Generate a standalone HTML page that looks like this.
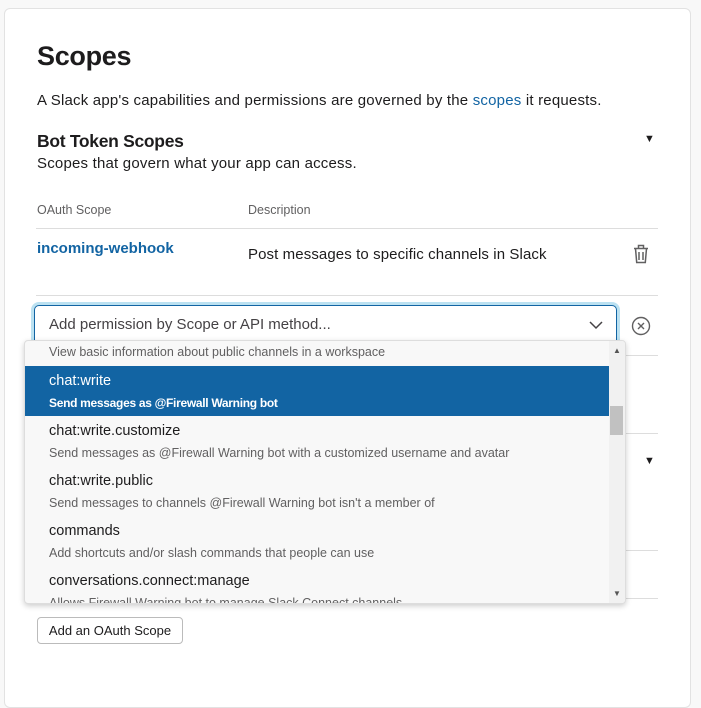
<!DOCTYPE html>
<html><head><style>
*{margin:0;padding:0;box-sizing:border-box}
body{width:701px;height:650px;background:#f8f8f8;font-family:"Liberation Sans",sans-serif;color:#1d1c1d;position:relative;overflow:hidden}
.card{position:absolute;left:4px;top:8px;width:687px;height:700px;background:#fff;border:1px solid #e2e2e2;border-radius:6px}
.a{position:absolute;white-space:nowrap}
.line{position:absolute;left:36px;width:622px;height:1px;background:#ddd}
.dd{position:absolute;left:24px;top:340px;width:602px;height:264px;background:#f8f8f8;border:1px solid #ddd;border-radius:4px;box-shadow:0 2px 6px rgba(0,0,0,.2);overflow:hidden}
.it{position:absolute;left:24px;white-space:nowrap}
.t{font-size:14.5px;color:#1d1c1d}
.d{font-size:12.5px;color:#616061}
</style></head><body>
<div class="card"></div>
<div class="a" style="left:37px;top:41px;font-size:27px;font-weight:bold;letter-spacing:-0.3px">Scopes</div>
<div class="a" style="left:37px;top:92px;font-size:15px;letter-spacing:0.2px">A Slack app's capabilities and permissions are governed by the <span style="color:#1264a3">scopes</span> it requests.</div>
<div class="a" style="left:37px;top:131px;font-size:17.5px;font-weight:bold;letter-spacing:-0.3px">Bot Token Scopes</div>
<div class="a" style="left:644px;top:133px;font-size:11px">▼</div>
<div class="a" style="left:37px;top:155px;font-size:15px;letter-spacing:0.2px">Scopes that govern what your app can access.</div>
<div class="a" style="left:37px;top:203px;font-size:12.5px;color:#616061">OAuth Scope</div>
<div class="a" style="left:248px;top:203px;font-size:12.5px;color:#616061">Description</div>
<div class="line" style="top:228px"></div>
<div class="a" style="left:37px;top:240px;font-size:15px;font-weight:bold;color:#1264a3">incoming-webhook</div>
<div class="a" style="left:248px;top:246px;font-size:15px;letter-spacing:0.1px">Post messages to specific channels in Slack</div>
<svg class="a" style="left:631px;top:243px" width="20" height="22" viewBox="0 0 20 22"><path d="M3 5.5h14M7.5 5.5V2.5h5v3M4.5 5.5l1.2 14h8.6l1.2-14M8 9v8M12 9v8" fill="none" stroke="#616061" stroke-width="1.5"/></svg>
<div class="line" style="top:295px"></div>
<div class="line" style="top:355px"></div>
<div class="line" style="top:433px"></div>
<div class="line" style="top:550px"></div>
<div class="line" style="top:598px"></div>
<div class="a" style="left:644px;top:455px;font-size:11px">▼</div>
<div class="a" style="left:34px;top:305px;width:583px;height:42px;border:1px solid #1264a3;border-radius:5px;box-shadow:0 0 0 3px rgba(29,155,209,.3);background:#fff"></div>
<div class="a" style="left:49px;top:316px;font-size:15px;color:#454245">Add permission by Scope or API method...</div>
<svg class="a" style="left:589px;top:320px" width="14" height="10"><path d="M1 2l6 6 6-6" fill="none" stroke="#454245" stroke-width="1.5"/></svg>
<svg class="a" style="left:630px;top:315px" width="22" height="22"><circle cx="11" cy="11" r="8.5" fill="none" stroke="#616061" stroke-width="1.4"/><path d="M8 8l6 6M14 8l-6 6" stroke="#616061" stroke-width="1.4"/></svg>
<div class="a" style="left:37px;top:617px;width:146px;height:27px;border:1px solid #bbb;border-radius:4px;background:#fff;font-size:13px;text-align:center;line-height:25px">Add an OAuth Scope</div>
<div class="dd">
 <div class="it d" style="top:4px">View basic information about public channels in a workspace</div>
 <div style="position:absolute;left:0;top:25px;width:584px;height:50px;background:#1264a3"></div>
 <div class="it t" style="top:32px;color:#fff">chat:write</div>
 <div class="it d" style="top:55px;color:#fff;font-weight:bold;font-size:12px;letter-spacing:-0.3px">Send messages as @Firewall Warning bot</div>
 <div class="it t" style="top:82px">chat:write.customize</div>
 <div class="it d" style="top:105px">Send messages as @Firewall Warning bot with a customized username and avatar</div>
 <div class="it t" style="top:132px">chat:write.public</div>
 <div class="it d" style="top:155px">Send messages to channels @Firewall Warning bot isn't a member of</div>
 <div class="it t" style="top:182px">commands</div>
 <div class="it d" style="top:205px">Add shortcuts and/or slash commands that people can use</div>
 <div class="it t" style="top:232px">conversations.connect:manage</div>
 <div class="it d" style="top:255px">Allows Firewall Warning bot to manage Slack Connect channels</div>
 <div style="position:absolute;left:584px;top:0;width:17px;height:264px;background:#f1f1f1"></div>
 <div style="position:absolute;left:585px;top:65px;width:13px;height:29px;background:#c1c1c1"></div>
 <div style="position:absolute;left:588px;top:5px;font-size:8px;color:#555">▲</div>
 <div style="position:absolute;left:588px;top:248px;font-size:8px;color:#555">▼</div>
</div>
</body></html>
